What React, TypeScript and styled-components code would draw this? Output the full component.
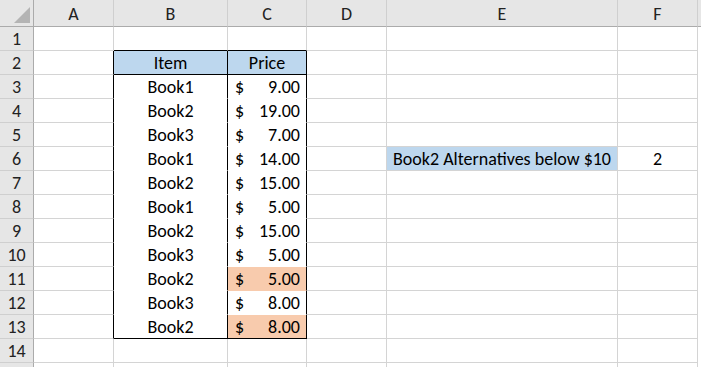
import { FC } from "react";
import styled, { createGlobalStyle } from "styled-components";

const GlobalStyle = createGlobalStyle`
  html, body {
    margin: 0;
    padding: 0;
    background: #ffffff;
    overflow: hidden;
  }
  body {
    font-family: Carlito, Lato, "Liberation Sans", sans-serif;
  }
`;

const GRID = "#d4d4d4";
const HEAD_LINE = "#ababab";
const BLUE = "#bdd7ee";
const ORANGE = "#f8cbad";

// widths include the 1px right border of each column
const COLS = [34, 80, 114, 79, 80, 231, 80];

const Sheet = styled.div`
  display: grid;
  grid-template-columns: ${COLS.map((c) => `${c}px`).join(" ")} 1fr;
  grid-template-rows: 27px repeat(15, 24px);
  width: 701px;
  height: 367px;
  overflow: hidden;
  font-size: 18px;
  color: #000;
`;

const Corner = styled.div`
  background: #e6e6e6;
  border-right: 1px solid ${HEAD_LINE};
  border-bottom: 1px solid ${HEAD_LINE};
  box-sizing: border-box;
  display: flex;
  align-items: flex-end;
  justify-content: flex-end;
  padding: 0 3px 3px 0;
`;

const ColHead = styled.div<{ last?: boolean }>`
  background: #e6e6e6;
  box-sizing: border-box;
  border-right: 1px solid ${(p) => (p.last ? "#e6e6e6" : "#cfcfcf")};
  border-bottom: 1px solid ${HEAD_LINE};
  display: flex;
  align-items: center;
  justify-content: center;
  padding-top: 1px;
  color: #222;
  font-size: 18px;
`;

const RowHead = styled.div`
  background: #e6e6e6;
  box-sizing: border-box;
  border-right: 1px solid ${HEAD_LINE};
  border-bottom: 1px solid #cfcfcf;
  display: flex;
  align-items: center;
  justify-content: center;
  color: #222;
  font-size: 18px;
`;

const Cell = styled.div<{
  fill?: string;
  right?: string;
  bottom?: string;
  align?: "left" | "center" | "right";
}>`
  box-sizing: border-box;
  background: ${(p) => p.fill ?? "#fff"};
  border-right: 1px solid ${(p) => p.right ?? GRID};
  border-bottom: 1px solid ${(p) => p.bottom ?? GRID};
  display: flex;
  align-items: center;
  justify-content: ${(p) =>
    p.align === "center" ? "center" : p.align === "right" ? "flex-end" : "flex-start"};
  padding: 1px 6px 0 6px;
  white-space: nowrap;
  overflow: visible;
`;

const Money = styled.div`
  display: flex;
  justify-content: space-between;
  width: 100%;
  padding: 0 0 0 1px;
`;

const items: [string, number, boolean][] = [
  ["Book1", 9, false],
  ["Book2", 19, false],
  ["Book3", 7, false],
  ["Book1", 14, false],
  ["Book2", 15, false],
  ["Book1", 5, false],
  ["Book2", 15, false],
  ["Book3", 5, false],
  ["Book2", 5, true],
  ["Book3", 8, false],
  ["Book2", 8, true],
];

const CornerMark: FC = () => (
  <svg width="16" height="16" viewBox="0 0 16 16">
    <polygon points="16,0 16,16 0,16" fill="#b4b4b4" />
  </svg>
);

const App: FC = () => {
  const rows = [];
  for (let r = 1; r <= 15; r++) {
    const inTable = r >= 2 && r <= 13;
    const edgeAbove = r === 1;
    const item = r >= 3 && r <= 13 ? items[r - 3] : undefined;
    // inner rows of the table have white fill, so gridlines are hidden there
    const tableBottom =
      r === 1 || r === 2 || r === 13 ? "#000" : inTable ? "#fff" : undefined;

    rows.push(<RowHead key={`h${r}`}>{r <= 14 ? r : ""}</RowHead>);
    rows.push(<Cell key={`a${r}`} right={inTable ? "#000" : undefined} />);

    if (r === 2) {
      rows.push(
        <Cell key="b2" fill={BLUE} right="#000" bottom="#000" align="center">
          Item
        </Cell>
      );
      rows.push(
        <Cell key="c2" fill={BLUE} right="#000" bottom="#000" align="center">
          Price
        </Cell>
      );
    } else if (item) {
      rows.push(
        <Cell key={`b${r}`} right="#000" bottom={tableBottom} align="center">
          {item[0]}
        </Cell>
      );
      rows.push(
        <Cell
          key={`c${r}`}
          right="#000"
          bottom={item[2] ? (r === 13 ? "#000" : ORANGE) : tableBottom}
          fill={item[2] ? ORANGE : undefined}
        >
          <Money>
            <span>$</span>
            <span>{item[1].toFixed(2)}</span>
          </Money>
        </Cell>
      );
    } else {
      rows.push(<Cell key={`b${r}`} bottom={edgeAbove ? "#000" : undefined} />);
      rows.push(<Cell key={`c${r}`} bottom={edgeAbove ? "#000" : undefined} />);
    }

    rows.push(<Cell key={`d${r}`} />);
    if (r === 6) {
      rows.push(
        <Cell key="e6" fill={BLUE}>
          Book2 Alternatives below $10
        </Cell>
      );
      rows.push(
        <Cell key="f6" align="center">
          2
        </Cell>
      );
    } else {
      rows.push(<Cell key={`e${r}`} />);
      rows.push(<Cell key={`f${r}`} />);
    }
    rows.push(<Cell key={`g${r}`} right="#fff" bottom="#fff" />);
  }

  return (
    <>
      <GlobalStyle />
      <Sheet>
        <Corner>
          <CornerMark />
        </Corner>
        {["A", "B", "C", "D", "E", "F"].map((c) => (
          <ColHead key={c}>{c}</ColHead>
        ))}
        <ColHead last />
        {rows}
      </Sheet>
    </>
  );
};

export default App;
